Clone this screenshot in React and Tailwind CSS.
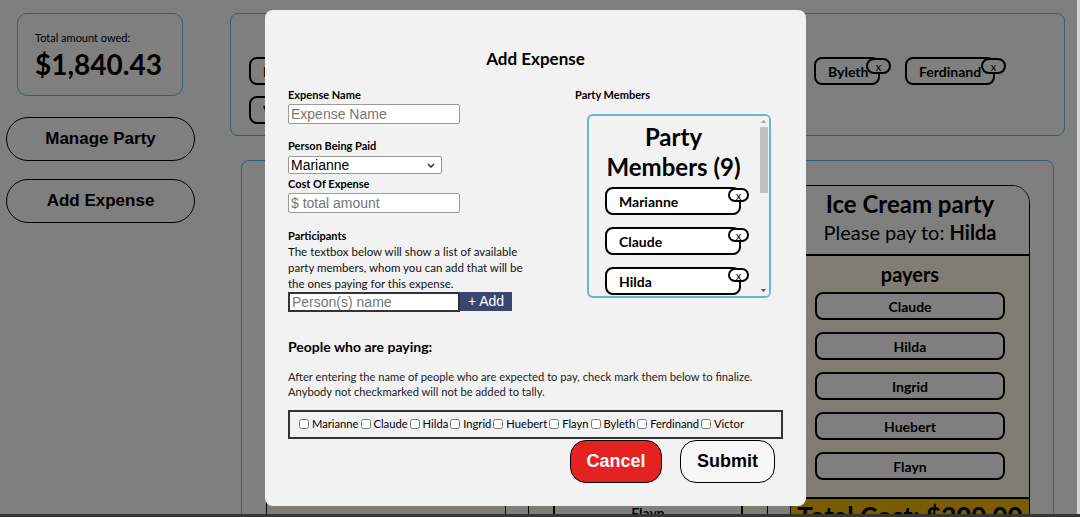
import React from 'react';

const seg = "font-['Lato','Noto_Sans',sans-serif]";
const arial = "font-['Liberation_Sans',Arial,sans-serif]";

const topChips = [
  { name: 'Marianne', w: 'w-[90px]' },
  { name: 'Claude', w: 'w-[70px]' },
  { name: 'Hilda', w: 'w-[58px]' },
  { name: 'Ingrid', w: 'w-[62px]' },
  { name: 'Huebert', w: 'w-[75px]' },
  { name: 'Flayn', w: 'w-[60px]' },
  { name: 'Byleth', w: 'w-[66px]' },
  { name: 'Ferdinand', w: 'w-[90px]' },
];

const members = ['Marianne', 'Claude', 'Hilda', 'Ingrid', 'Huebert', 'Flayn', 'Byleth', 'Ferdinand', 'Victor'];

const Chip = ({ name, w, small }) => (
  <div className={`relative h-[28px] ${w} rounded-lg border-2 border-black bg-white pl-[12px] flex items-center text-[14px] font-bold text-black`}>
    {name}
    <span
      className={`absolute -top-[1px] flex items-center justify-center rounded-full border-2 border-black bg-white text-[11px] font-normal leading-none ${
        small ? '-right-[10px] w-[21px] h-[14px]' : '-right-[13px] w-[25px] h-[16px]'
      }`}
    >
      x
    </span>
  </div>
);

// header heights: 70 is the normal one, the others keep the page's card rows where they fall
const ExpenseCard = ({ title, payTo, payers, headerH = 'h-[70px]' }) => (
  <div className="w-[240px] shrink-0 rounded-t-[18px] border border-black overflow-hidden">
    <div className={`bg-white border-b-2 border-black text-center pt-[3px] ${headerH}`}>
      <p className="text-[24px] font-bold leading-[30px]">{title}</p>
      <p className="text-[20px] leading-[26px]">
        Please pay to: <b>{payTo}</b>
      </p>
    </div>
    <div className="bg-[#fefae9] pt-[5px] pb-[17px] flex flex-col items-center">
      <p className="text-[20px] font-bold leading-[26px] mb-[5px]">payers</p>
      <div className="flex flex-col gap-[12px]">
        {payers.map((p) => (
          <div key={p} className="w-[190px] h-[28px] rounded-lg border-2 border-black bg-white flex items-center justify-center text-[14px] font-bold">
            {p}
          </div>
        ))}
      </div>
    </div>
    <div className="bg-[#f5b908] border-t-2 border-black h-[60px] text-center text-[26px] font-bold leading-[34px]">
      Total Cost: $200.00
    </div>
  </div>
);

const App = () => {
  return (
    <div className={`relative w-[1080px] h-[517px] overflow-hidden bg-white text-black ${seg}`}>
      {/* PAGE BEHIND THE MODAL */}
      <div className="flex h-full">
        <aside className="w-[230px] shrink-0 pt-[13px]">
          <div className="ml-[17px] w-[166px] h-[83px] rounded-[10px] border border-[#74b8d8] pl-[17px] pt-[17px]">
            <p className="text-[11px] leading-[14px]">Total amount owed:</p>
            <p className="text-[28px] font-bold leading-[32px] mt-[3px]">$1,840.43</p>
          </div>
          <button className={`block ml-[6px] mt-[21px] w-[189px] h-[44px] rounded-[22px] border border-black text-[17px] font-bold ${arial}`}>
            Manage Party
          </button>
          <button className={`block ml-[6px] mt-[18px] w-[189px] h-[44px] rounded-[22px] border border-black text-[17px] font-bold ${arial}`}>
            Add Expense
          </button>
        </aside>

        <main className="flex-1 pt-[13px] pr-[15px]">
          <section className="h-[123px] rounded-[8px] border border-[#74b8d8] pl-[18px] pt-[43px]">
            <div className="flex flex-wrap gap-x-[25px] gap-y-[11px]">
              {topChips.map((c) => (
                <Chip key={c.name} name={c.name} w={c.w} />
              ))}
              <Chip name="Victor" w="w-[64px]" />
            </div>
          </section>

          <section className="mx-[11px] mt-[24px] h-[400px] rounded-t-[8px] border border-[#74b8d8] pl-[24px] pt-[24px] flex gap-[22px]">
            <ExpenseCard title="Dinner" payTo="Claude" payers={['Marianne', 'Ingrid', 'Huebert', 'Flayn', 'Byleth', 'Ferdinand', 'Victor']} headerH="h-[94px]" />
            <ExpenseCard title="Tea Time at the Garden" payTo="Ferdinand" payers={['Marianne', 'Claude', 'Hilda', 'Byleth', 'Flayn']} headerH="h-[116px]" />
            <ExpenseCard title="Ice Cream party" payTo="Hilda" payers={['Claude', 'Hilda', 'Ingrid', 'Huebert', 'Flayn']} />
          </section>
        </main>
      </div>

      {/* OVERLAY */}
      <div className="absolute inset-0 bg-black/50" />

      {/* MODAL */}
      <div className="absolute left-[265px] top-[10px] w-[541px] h-[496px] rounded-[8px] bg-[#f2f2f2] px-[23px] pt-[38px]">
        <h2 className="text-center text-[17px] font-bold leading-[22px]">Add Expense</h2>

        <div className="flex mt-[18px]">
          <div className="w-[287px]">
            <label className="block text-[11px] font-bold leading-[14px]">Expense Name</label>
            <input
              placeholder="Expense Name"
              className={`block mt-[2px] w-[172px] h-[20px] border border-[#9a9a9a] rounded-[2px] bg-white px-[2px] text-[14px] placeholder:text-[#767676] ${arial}`}
            />
            <label className="block mt-[15px] text-[11px] font-bold leading-[14px]">Person Being Paid</label>
            <div className="relative mt-[3px] w-[154px] h-[18px] border border-[#9a9a9a] rounded-[2px] bg-white">
              <span className={`block pl-[2px] text-[14px] leading-[16px] ${arial}`}>Marianne</span>
              <svg className="absolute right-[6px] top-[6px]" width="8" height="5" viewBox="0 0 8 5">
                <polyline points="1,1 4,4 7,1" fill="none" stroke="#222" strokeWidth="1.3" />
              </svg>
            </div>
            <label className="block mt-[3px] text-[11px] font-bold leading-[14px]">Cost Of Expense</label>
            <input
              placeholder="$ total amount"
              className={`block mt-[2px] w-[172px] h-[20px] border border-[#9a9a9a] rounded-[2px] bg-white px-[2px] text-[14px] placeholder:text-[#767676] ${arial}`}
            />
            <label className="block mt-[16px] text-[11px] font-bold leading-[14px]">Participants</label>
            <p className="mt-[1px] w-[245px] text-[11.5px] leading-[16px] text-[#111]">
              The textbox below will show a list of available party members, whom you can add that will be the ones paying for this expense.
            </p>
            <div className="flex items-start">
              <input
                placeholder="Person(s) name"
                className={`w-[172px] h-[20px] border-2 border-[#333] bg-white px-[2px] text-[14px] placeholder:text-[#767676] ${arial}`}
              />
              <button className={`w-[52px] h-[19px] bg-[#3a4670] text-white text-[14px] leading-[19px] ${arial}`}>+ Add</button>
            </div>
          </div>

          <div className="flex-1">
            <p className="text-[11px] font-bold leading-[14px]">Party Members</p>
            <div className="mt-[12px] ml-[12px] w-[184px] h-[184px] rounded-[6px] border-2 border-[#6cb3d4] bg-[#f2f2f2] flex overflow-hidden">
              <div className="flex-1 overflow-hidden pt-[6px] pl-[16px]">
                <p className="text-center pr-[16px] text-[24px] font-bold leading-[30px]">Party Members (9)</p>
                <div className="mt-[5px] flex flex-col gap-[12px]">
                  {members.map((m) => (
                    <Chip key={m} name={m} w="w-[136px]" small />
                  ))}
                </div>
              </div>
              <div className="w-[11px] bg-[#f1f1f1] flex flex-col items-center">
                <svg width="7" height="11" viewBox="0 0 7 11">
                  <polygon points="1,7 3.5,4 6,7" fill="#a3a3a3" />
                </svg>
                <div className="w-[8px] h-[66px] bg-[#c1c1c1]" />
                <div className="flex-1" />
                <svg width="7" height="11" viewBox="0 0 7 11">
                  <polygon points="1,4 3.5,7 6,4" fill="#505050" />
                </svg>
              </div>
            </div>
          </div>
        </div>

        <h3 className="mt-[26px] text-[14px] font-bold leading-[18px]">People who are paying:</h3>
        <p className="mt-[13px] text-[11.2px] leading-[15px] text-[#222] whitespace-nowrap">
          After entering the name of people who are expected to pay, check mark them below to finalize.
          <br />
          Anybody not checkmarked will not be added to tally.
        </p>
        <div className="mt-[11px] h-[29px] border-2 border-[#333] pl-[7px] flex items-center text-[11.2px] whitespace-nowrap overflow-hidden">
          {members.map((m) => (
            <label key={m} className="flex items-center">
              <input type="checkbox" className="w-[10px] h-[10px] ml-[2px] mr-[3px]" />
              {m}
            </label>
          ))}
        </div>
        <div className="mt-[1px] pr-[8px] flex justify-end gap-[18px]">
          <button className={`w-[92px] h-[43px] rounded-[16px] border border-black bg-[#e52222] text-white text-[18px] font-bold ${arial}`}>
            Cancel
          </button>
          <button className={`w-[95px] h-[43px] rounded-[16px] border border-black bg-[#f7f7f7] text-black text-[18px] font-bold ${arial}`}>
            Submit
          </button>
        </div>
      </div>

      {/* WINDOW EDGES */}
      <div className="absolute right-0 top-0 w-[3px] h-full bg-[#d6d6d6]" />
      <div className="absolute left-0 bottom-0 w-full h-[3px] bg-[#363636]" />
    </div>
  );
};

export default App;
